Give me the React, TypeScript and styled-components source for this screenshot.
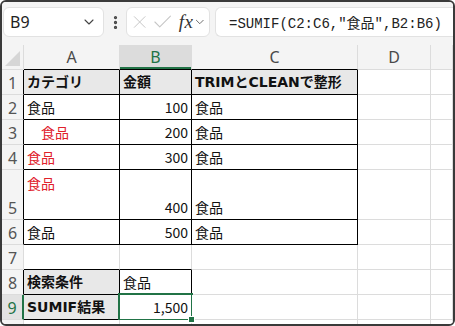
import React from "react";
import styled, { createGlobalStyle, css } from "styled-components";
import { ChevronDown, EllipsisVertical, X, Check } from "lucide-react";

const GlobalStyle = createGlobalStyle`
  body {
    margin: 0;
    background: #ffffff;
  }
`;

const green = "#217346";
const grid = "#dcdcdc";
const cellFont = `"Noto Sans CJK JP", "Noto Sans", sans-serif`;
const boldFont = `"DejaVu Sans", "Noto Sans CJK JP", sans-serif`;

const Frame = styled.div`
  width: 455px;
  height: 326px;
  box-sizing: border-box;
  border: 2px solid #3a3a3a;
  border-radius: 6px;
  overflow: hidden;
  background: #ffffff;
  display: flex;
  flex-direction: column;
`;

const Toolbar = styled.div`
  height: 43px;
  flex: none;
  box-sizing: border-box;
  padding: 5px 0 0 1px;
  display: flex;
  align-items: flex-start;
  background: #f4f4f4;
`;

const Box = styled.div<{ $width?: number }>`
  height: 30px;
  box-sizing: border-box;
  background: #ffffff;
  border: 1px solid #e2e2e2;
  border-radius: 6px;
  display: flex;
  align-items: center;
  ${(p) => (p.$width ? `width: ${p.$width}px; flex: none;` : "flex: 1;")}
`;

const NameBox = styled(Box)`
  justify-content: space-between;
  padding: 0 6px 0 6px;
  font-family: "Noto Sans", "Liberation Sans", sans-serif;
  font-size: 16px;
  color: #222;
`;

const Dots = styled.div`
  width: 22px;
  height: 30px;
  flex: none;
  display: flex;
  align-items: center;
  justify-content: center;
  color: #444;
`;

const FxBox = styled(Box)`
  padding: 0 2px 0 2px;
  gap: 0;
`;

const Fx = styled.span`
  font-family: "Liberation Serif", "DejaVu Serif", serif;
  font-style: italic;
  font-size: 19px;
  line-height: 20px;
  color: #333;
  margin-left: 4px;
  letter-spacing: 0.5px;
`;

const FormulaBox = styled(Box)`
  margin-left: 5px;
  border-right: none;
  border-radius: 6px 0 0 6px;
  padding-left: 13px;
  font-family: "Liberation Mono", "Noto Sans CJK JP", monospace;
  font-size: 14px;
  color: #222;
  white-space: nowrap;
`;

const cols = "22px 96px 72px 166px 73px 1fr";

const Row = styled.div<{ $h: number }>`
  display: grid;
  grid-template-columns: ${cols};
  height: ${(p) => p.$h}px;
  flex: none;
`;

const Corner = styled.div`
  position: relative;
  background: #f4f4f4;
  border-right: 1px solid ${grid};
  border-bottom: 1px solid ${grid};
  &::after {
    content: "";
    position: absolute;
    right: 3px;
    bottom: 3px;
    width: 0;
    height: 0;
    border-left: 15px solid transparent;
    border-bottom: 15px solid #d6d6d6;
  }
`;

const ColHead = styled.div<{ $active?: boolean; $bb?: boolean }>`
  box-sizing: border-box;
  background: ${(p) => (p.$active ? "#dcdcdc" : "#f4f4f4")};
  border-right: 1px solid ${grid};
  border-bottom: 1px solid ${(p) => (p.$bb ? "#000" : grid)};
  display: flex;
  align-items: center;
  justify-content: center;
  font-family: "Noto Sans", "Liberation Sans", sans-serif;
  font-size: 16px;
  color: ${(p) => (p.$active ? green : "#4a4a4a")};
  ${(p) =>
    p.$active &&
    css`
      box-shadow: inset 0 -2px 0 ${green};
    `}
`;

const RowHead = styled.div<{ $active?: boolean; $rb?: boolean }>`
  box-sizing: border-box;
  background: ${(p) => (p.$active ? "#e2e2e2" : "#f4f4f4")};
  border-right: 1px solid ${(p) => (p.$rb ? "#000" : grid)};
  border-bottom: 1px solid ${grid};
  display: flex;
  align-items: flex-end;
  justify-content: center;
  padding-bottom: 0;
  font-family: "Noto Sans", "Liberation Sans", sans-serif;
  font-size: 16px;
  line-height: 22px;
  color: ${(p) => (p.$active ? green : "#555")};
  ${(p) =>
    p.$active &&
    css`
      border-right: 2px solid ${green};
    `}
`;

type CellProps = {
  $right?: boolean;
  $bold?: boolean;
  $fill?: boolean;
  $red?: boolean;
  $rb?: boolean;
  $bb?: boolean;
  $top?: boolean;
  $selected?: boolean;
};

const Cell = styled.div<CellProps>`
  position: relative;
  box-sizing: border-box;
  min-width: 0;
  overflow: visible;
  white-space: pre;
  background: ${(p) => (p.$fill ? "#e8e8e8" : "#ffffff")};
  border-right: 1px solid ${(p) => (p.$rb ? "#000" : grid)};
  border-bottom: 1px solid ${(p) => (p.$bb ? "#000" : grid)};
  display: flex;
  align-items: ${(p) => (p.$top ? "flex-start" : "flex-end")};
  justify-content: ${(p) => (p.$right ? "flex-end" : "flex-start")};
  padding: ${(p) => (p.$top ? "3px 3px 0 3px" : "0 3px 2px 3px")};
  font-family: ${(p) => (p.$bold ? boldFont : cellFont)};
  font-size: 14px;
  line-height: 20px;
  font-weight: ${(p) => (p.$bold ? 700 : 400)};
  color: ${(p) => (p.$red ? "#e0202a" : "#111")};
  ${(p) =>
    p.$selected &&
    css`
      &::after {
        content: "";
        position: absolute;
        left: -2px;
        top: -2px;
        right: -2px;
        bottom: -2px;
        border: 2px solid ${green};
      }
      &::before {
        content: "";
        position: absolute;
        right: -4px;
        bottom: -4px;
        width: 5px;
        height: 5px;
        background: ${green};
        border: 1px solid #fff;
        z-index: 2;
      }
    `}
`;

type CellDef = { text?: string } & CellProps;

type RowDef = {
  n: string;
  h: number;
  rb?: boolean;
  active?: boolean;
  cells: CellDef[];
};

// cells inside the bordered tables
const tb = { $rb: true, $bb: true };

const rows: RowDef[] = [
  {
    n: "1",
    h: 25,
    rb: true,
    cells: [
      { text: "カテゴリ", $bold: true, $fill: true, ...tb },
      { text: "金額", $bold: true, $fill: true, ...tb },
      { text: "TRIMとCLEANで整形", $bold: true, $fill: true, ...tb },
      {},
      {},
    ],
  },
  {
    n: "2",
    h: 25,
    rb: true,
    cells: [
      { text: "食品", ...tb },
      { text: "100", $right: true, ...tb },
      { text: "食品", ...tb },
      {},
      {},
    ],
  },
  {
    n: "3",
    h: 25,
    rb: true,
    cells: [
      { text: "　食品", $red: true, ...tb },
      { text: "200", $right: true, ...tb },
      { text: "食品", ...tb },
      {},
      {},
    ],
  },
  {
    n: "4",
    h: 25,
    rb: true,
    cells: [
      { text: "食品", $red: true, ...tb },
      { text: "300", $right: true, ...tb },
      { text: "食品", ...tb },
      {},
      {},
    ],
  },
  {
    n: "5",
    h: 50,
    rb: true,
    cells: [
      { text: "食品", $red: true, $top: true, ...tb },
      { text: "400", $right: true, ...tb },
      { text: "食品", ...tb },
      {},
      {},
    ],
  },
  {
    n: "6",
    h: 25,
    rb: true,
    cells: [
      { text: "食品", ...tb },
      { text: "500", $right: true, ...tb },
      { text: "食品", ...tb },
      {},
      {},
    ],
  },
  {
    n: "7",
    h: 25,
    cells: [{ $bb: true }, { $bb: true }, {}, {}, {}],
  },
  {
    n: "8",
    h: 25,
    rb: true,
    cells: [
      { text: "検索条件", $bold: true, $fill: true, ...tb },
      { text: "食品", ...tb },
      {},
      {},
      {},
    ],
  },
  {
    n: "9",
    h: 25,
    rb: true,
    active: true,
    cells: [
      { text: "SUMIF結果", $bold: true, $fill: true, ...tb },
      { text: "1,500", $right: true, $selected: true, ...tb },
      {},
      {},
      {},
    ],
  },
  { n: "", h: 25, cells: [{}, {}, {}, {}, {}] },
];

const colNames = ["A", "B", "C", "D", ""];

const App: React.FC = () => {
  return (
    <>
      <GlobalStyle />
      <Frame>
        <Toolbar>
          <NameBox $width={101}>
            <span>B9</span>
            <ChevronDown size={16} strokeWidth={1.6} color="#444" />
          </NameBox>
          <Dots>
            <EllipsisVertical size={17} strokeWidth={2.6} />
          </Dots>
          <FxBox $width={84}>
            <X size={22} strokeWidth={1.1} color="#c6c6c6" />
            <Check size={24} strokeWidth={1.1} color="#c6c6c6" style={{ marginLeft: 1 }} />
            <Fx>fx</Fx>
            <ChevronDown size={14} strokeWidth={1.5} color="#555" />
          </FxBox>
          <FormulaBox>=SUMIF(C2:C6,"食品",B2:B6)</FormulaBox>
        </Toolbar>

        <Row $h={25}>
          <Corner />
          {colNames.map((c, i) => (
            <ColHead key={i} $active={c === "B"} $bb={i < 3}>
              {c}
            </ColHead>
          ))}
        </Row>

        {rows.map((r, ri) => (
          <Row key={ri} $h={r.h}>
            <RowHead $rb={r.rb} $active={r.active}>
              {r.n}
            </RowHead>
            {r.cells.map((c, ci) => {
              const { text, ...rest } = c;
              return (
                <Cell key={ci} {...rest}>
                  {text}
                </Cell>
              );
            })}
          </Row>
        ))}
      </Frame>
    </>
  );
};

export default App;
